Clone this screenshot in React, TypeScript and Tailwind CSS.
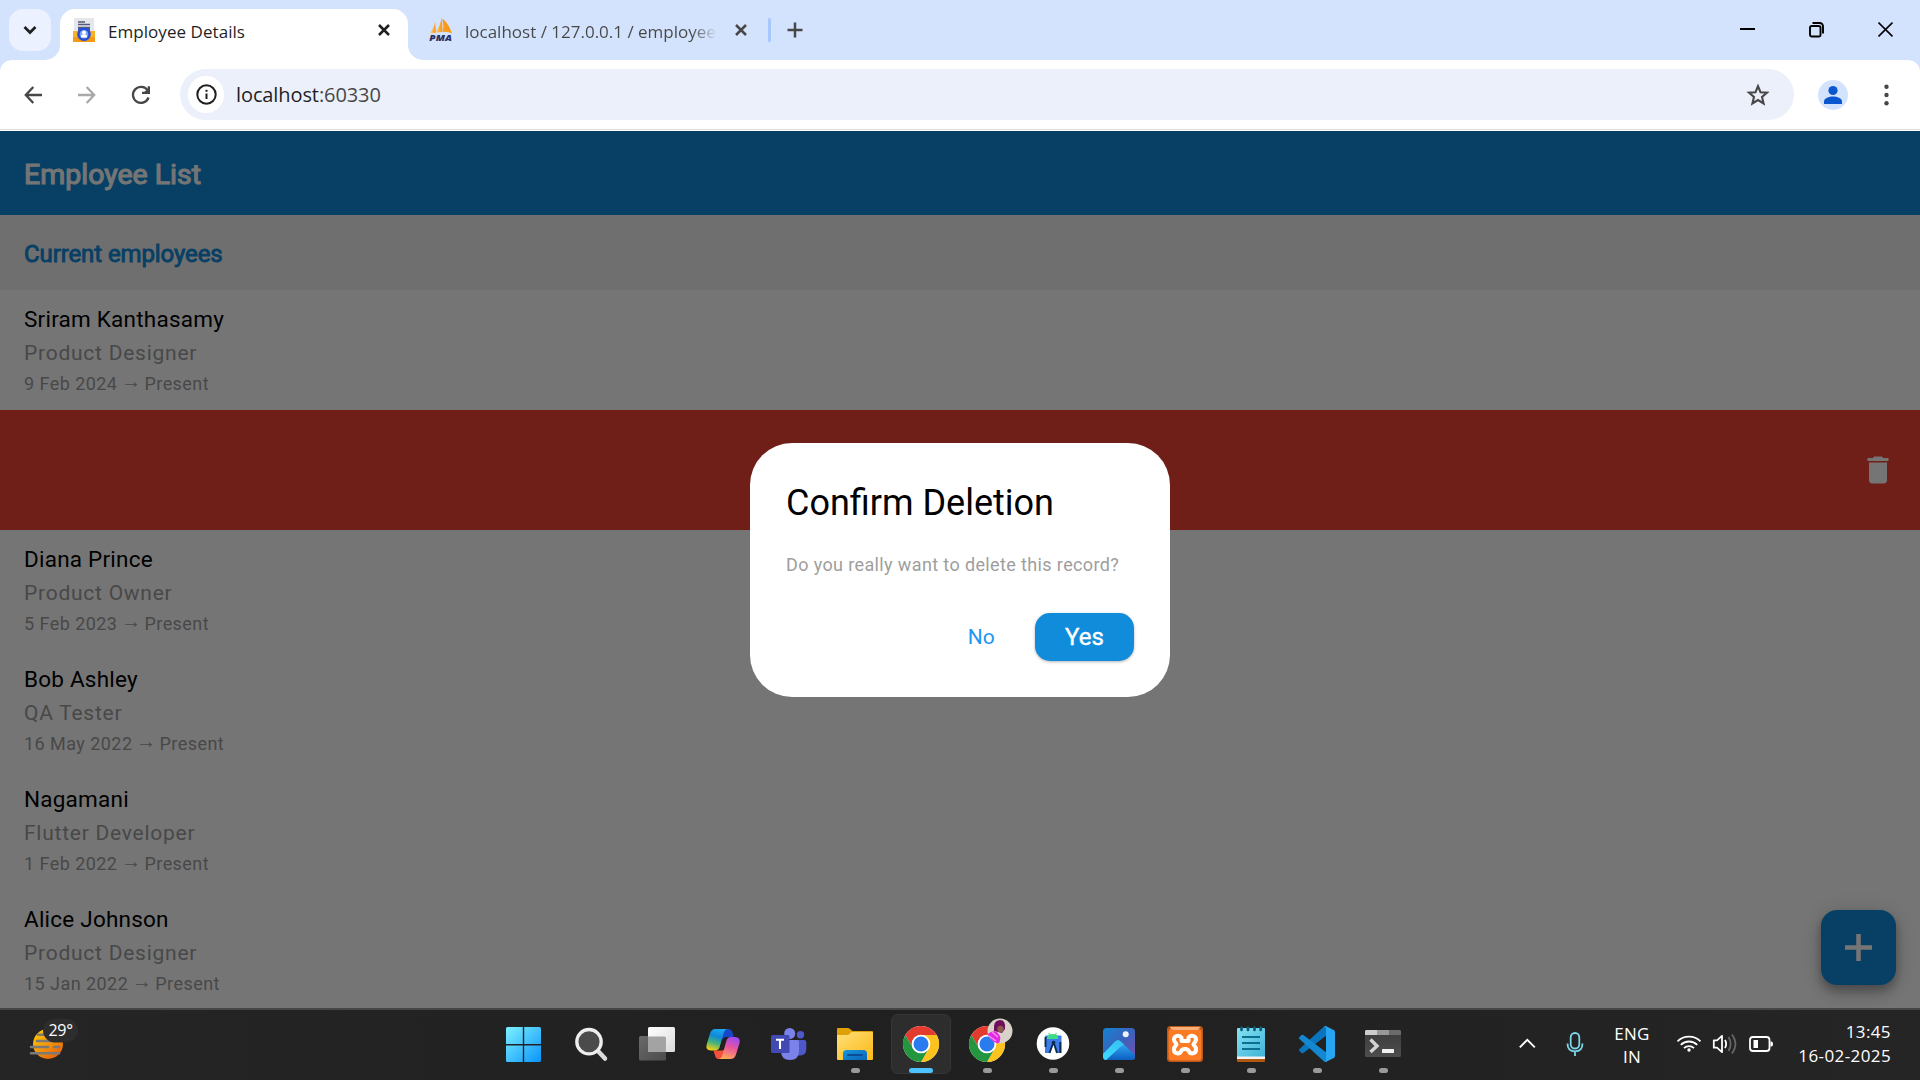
import React from "react";

const employees = [
  { name: "Sriram Kanthasamy", role: "Product Designer", since: "9 Feb 2024" },
  null,
  { name: "Diana Prince", role: "Product Owner", since: "5 Feb 2023" },
  { name: "Bob Ashley", role: "QA Tester", since: "16 May 2022" },
  { name: "Nagamani", role: "Flutter Developer", since: "1 Feb 2022" },
  { name: "Alice Johnson", role: "Product Designer", since: "15 Jan 2022" },
];

/* ---------- browser chrome ---------- */

function TabStrip() {
  return (
    <div className="relative flex h-[60px] bg-[#d3e3fd]">
      <div className="ml-[9px] mt-[9px] flex h-[42px] w-[42px] items-center justify-center rounded-[14px] bg-[#ebf1ff]">
        <svg width="14" height="10" viewBox="0 0 14 10" fill="none" stroke="#1f1f1f" strokeWidth="2.7">
          <path d="M1.5 2 L7 7.5 L12.500 2" />
        </svg>
      </div>

      <div className="relative ml-[9px] mt-[9px] flex h-[51px] w-[348px] items-center rounded-t-[15px] bg-white">
        <svg className="absolute -left-[15px] bottom-0" width="15" height="15" viewBox="0 0 15 15" fill="#fff">
          <path d="M15 0 V15 H0 A15 15 0 0 0 15 0Z" />
        </svg>
        <svg className="absolute -right-[15px] bottom-0" width="15" height="15" viewBox="0 0 15 15" fill="#fff">
          <path d="M0 0 V15 H15 A15 15 0 0 1 0 0Z" />
        </svg>
        <svg className="-mt-[9px] ml-[13px] shrink-0" width="22" height="24" viewBox="0 0 22 24">
          <path d="M1 0 H21 V14 H1Z" fill="#e6e7ea" />
          <path d="M5 4 h7 M5 6.500 h12 M5 9.500 h12" stroke="#555b78" strokeWidth="1.600" />
          <path d="M0 13 H22 V24 H0Z" fill="#fbb02a" />
          <path d="M0 19 H22 V24 H0Z" fill="#f59a16" />
          <path d="M5 10 H17 V17 H5Z" fill="#4a5aa5" />
          <circle cx="11" cy="16.300" r="6.800" fill="#2450d8" />
          <circle cx="11" cy="16.300" r="4.200" fill="#7ea5fa" />
          <circle cx="11" cy="14.500" r="2" fill="#fff" />
          <path d="M7.800 19.400 a3.200 3.200 0 0 1 6.400 0Z" fill="#fff" />
        </svg>
        <span className="-mt-[6px] ml-[13px] whitespace-nowrap font-['Open_Sans',sans-serif] text-[17px] leading-[24px] tracking-[0.05px] text-[#1f1f1f]">
          Employee Details
        </span>
        <svg className="-mt-[9px] ml-auto mr-[18px]" width="12" height="12" viewBox="0 0 12 12" stroke="#1f1f1f" strokeWidth="2.500">
          <path d="M1 1 L11 11 M11 1 L1 11" />
        </svg>
      </div>

      <div className="ml-[21px] mt-[9px] flex h-[42px] items-center">
        <svg className="overflow-visible" width="24" height="24" viewBox="0 0 24 24">
          <defs>
            <linearGradient id="sail" x1="0" y1="0" x2="1" y2="0">
              <stop offset="0" stopColor="#fdd08a" />
              <stop offset="1" stopColor="#f8930f" />
            </linearGradient>
          </defs>
          <path d="M6 3.500 Q5.800 9 1 15 Q4 15.500 7 14.500 Z" fill="url(#sail)" />
          <path d="M13 0 Q11 8 6.500 15 Q11 13.600 13.500 14 Z" fill="url(#sail)" />
          <path d="M13.500 0.500 Q20 6 23 15.500 Q18 13 14 14 Q15 8 13.500 0.500Z" fill="#f99a1c" />
          <text x="0.300" y="22.800" fontFamily="Open Sans, sans-serif" fontSize="9" fontWeight="800" fontStyle="italic" fill="#2c2d62" textLength="22.500" lengthAdjust="spacingAndGlyphs">PMA</text>
        </svg>
        <span className="mt-[3px] ml-[12px] w-[252px] overflow-hidden whitespace-nowrap bg-linear-to-r from-[#474747] from-90% to-[#47474700] bg-clip-text font-['Open_Sans',sans-serif] text-[17px] leading-[24px] text-transparent">
          localhost / 127.0.0.1 / employee
        </span>
        <svg className="ml-[18px]" width="12" height="12" viewBox="0 0 12 12" stroke="#474747" strokeWidth="2.500">
          <path d="M1 1 L11 11 M11 1 L1 11" />
        </svg>
        <div className="ml-[21px] h-[24px] w-[3px] rounded-full bg-[#a8c7fa]" />
        <svg className="ml-[16px]" width="16" height="16" viewBox="0 0 16 16" stroke="#474747" strokeWidth="2.500">
          <path d="M8 0.500 V15.500 M0.500 8 H15.500" />
        </svg>
      </div>

      <div className="ml-auto mr-[27px] mt-[21px] flex h-[17px] items-center gap-[54px]">
        <svg width="15" height="17" viewBox="0 0 15 17"><path d="M0 8 H15" stroke="#000" strokeWidth="2" /></svg>
        <svg width="15" height="17" viewBox="0 0 15 17" fill="none" stroke="#000" strokeWidth="1.900">
          <rect x="1" y="5" width="10.500" height="10.500" rx="1.800" />
          <path d="M3.500 2 H10.500 Q14 2 14 5.500 V12.500" />
        </svg>
        <svg width="15" height="17" viewBox="0 0 15 17" stroke="#000" strokeWidth="1.700">
          <path d="M0.500 1.500 L14.500 15.500 M14.500 1.500 L0.500 15.500" />
        </svg>
      </div>
    </div>
  );
}

function Toolbar() {
  return (
    <div className="bg-[#d3e3fd]">
      <div className="h-[71px] rounded-t-[12px] bg-white">
        <div className="flex h-[70px] w-full items-start border-b border-[#dfe1e5]">
          <svg className="mt-[26px] ml-[24px]" width="18" height="18" viewBox="0 0 18 18" fill="none" stroke="#474747" strokeWidth="2.300">
            <path d="M9.300 1 L1.800 9 L9.300 17 M1.800 9 H18" />
          </svg>
          <svg className="mt-[26px] ml-[36px]" width="18" height="18" viewBox="0 0 18 18" fill="none" stroke="#a9a9a9" strokeWidth="2.300">
            <path d="M8.700 1 L16.200 9 L8.700 17 M16.200 9 H0" />
          </svg>
          <svg className="mt-[25px] ml-[35px]" width="20" height="20" viewBox="0 0 20 20" fill="none" stroke="#474747" strokeWidth="2.300">
            <path d="M17.500 12.500 A8 8 0 1 1 16.500 5.200" />
            <path d="M17.800 1.200 V7.800 H11" />
            <path d="M17.800 4.500 V7.800 H14Z" fill="#474747" />
          </svg>
          <div className="mt-[9px] ml-[29px] flex h-[51px] w-[1614px] items-start rounded-full bg-[#ecf0fa]">
            <div className="mt-[7px] ml-[8px] flex h-[37px] w-[36px] items-center justify-center rounded-full bg-white">
              <svg width="21" height="21" viewBox="0 0 21 21">
                <circle cx="10.500" cy="10.500" r="9.200" fill="none" stroke="#1f1f1f" strokeWidth="2" />
                <path d="M10.500 9.500 V15" stroke="#1f1f1f" strokeWidth="2" />
                <path d="M10.500 5.800 V7.800" stroke="#1f1f1f" strokeWidth="2" />
              </svg>
            </div>
            <span className="mt-[11px] ml-[12px] whitespace-nowrap font-['Open_Sans',sans-serif] text-[20px] leading-[30px] tracking-[-0.100px] text-[#1f1f1f]">
              localhost<span className="text-[#474747]">:60330</span>
            </span>
            <svg className="mt-[14px] mr-[24px] ml-auto" width="24" height="24" viewBox="0 0 24 24" fill="none" stroke="#474747" strokeWidth="2.100">
              <path d="M12 3.200 L14.500 9.200 L21 9.700 L16 14 L17.600 20.500 L12 17 L6.400 20.500 L8 14 L3 9.700 L9.500 9.200Z" />
            </svg>
          </div>
          <svg className="mt-[20px] ml-[24px]" width="30" height="30" viewBox="0 0 30 30">
            <circle cx="15" cy="15" r="15" fill="#d3e3fd" />
            <circle cx="15" cy="10.500" r="4.600" fill="#0b57d0" />
            <path d="M6 24 V21.500 C6 18 11 16.500 15 16.500 S24 18 24 21.500 V24Z" fill="#0b57d0" />
          </svg>
          <svg className="mt-[24px] ml-[36px]" width="5" height="22" viewBox="0 0 5 22" fill="#474747">
            <circle cx="2.500" cy="2.800" r="2.200" />
            <circle cx="2.500" cy="11" r="2.200" />
            <circle cx="2.500" cy="19.200" r="2.200" />
          </svg>
        </div>
      </div>
    </div>
  );
}

/* ---------- page ---------- */

function EmployeePage() {
  return (
    <div className="relative h-[877px] overflow-hidden bg-white font-[Roboto,sans-serif]">
      <div className="flex h-[84px] items-center bg-[#118cdb] px-6 pt-[4px]">
        <h1 className="text-[28.500px] leading-[36px] font-normal text-white [-webkit-text-stroke:1.1px_#fff]">Employee List</h1>
      </div>
      <div className="flex h-[75px] items-center bg-[#f2f2f2] px-6 pt-[3px]">
        <h2 className="text-[24px] leading-[30px] font-normal tracking-[-0.100px] text-[#118cdb] [-webkit-text-stroke:0.9px_#118cdb]">Current employees</h2>
      </div>
      {employees.map((e, i) =>
        e ? (
          <div key={i} className="h-[120px] px-6 pt-3">
            <div className="text-[22.500px] leading-[34px] tracking-[0.225px] text-black">{e.name}</div>
            <div className="pt-px text-[21px] leading-[33px] tracking-[0.750px] text-[#9e9e9e]">{e.role}</div>
            <div className="-mt-px flex h-[30px] items-center gap-[5px] text-[18px] leading-[30px] tracking-[0.450px] text-[#9e9e9e]">
              <span>{e.since}</span>
              <span className="flex w-[17px] justify-center pb-[6px] font-['Liberation_Sans',sans-serif] text-[20px] leading-[24px] tracking-normal">→</span>
              <span>Present</span>
            </div>
          </div>
        ) : (
          <div key={i} className="flex h-[120px] items-center justify-end bg-[#f44336] pr-6">
            <svg width="36" height="36" viewBox="0 0 24 24" fill="#fff">
              <path d="M6 19c0 1.100.9 2 2 2h8c1.100 0 2-.9 2-2V7H6v12zM19 4h-3.500l-1-1h-5l-1 1H5v2h14V4z" />
            </svg>
          </div>
        )
      )}

      <button className="absolute right-6 bottom-[23px] flex h-[75px] w-[75px] items-center justify-center rounded-[16px] bg-[#118cdb] shadow-[0_5px_8px_rgba(0,0,0,0.2),0_9px_15px_rgba(0,0,0,0.16),0_2px_27px_rgba(0,0,0,0.12)]">
        <svg width="27" height="27" viewBox="0 0 27 27" stroke="#fff" strokeWidth="4.500">
          <path d="M13.500 0 V27 M0 13.500 H27" />
        </svg>
      </button>

      <div className="absolute inset-0 bg-black/54" />

      <div className="absolute top-[312px] left-[750px] flex h-[254px] w-[420px] flex-col rounded-[42px] bg-white p-9">
        <div className="pt-px text-[36px] leading-[46px] text-black">Confirm Deletion</div>
        <div className="mt-[23px] whitespace-nowrap text-[18px] leading-[31px] tracking-[0.375px] text-[#9e9e9e]">
          Do you really want to delete this record?
        </div>
        <div className="mt-[33px] flex items-center justify-end gap-10">
          <button className="text-[21px] leading-[30px] tracking-[0.150px] text-[#2196f3]">No</button>
          <button className="h-[48px] w-[99px] rounded-[15px] bg-[#118cdb] text-[24px] leading-[46px] text-white shadow-[0_1px_3px_rgba(0,0,0,0.3)] [-webkit-text-stroke:0.4px_#fff]">
            Yes
          </button>
        </div>
      </div>
    </div>
  );
}

/* ---------- taskbar ---------- */

function Cell({ x, w = 66, children }: { x: number; w?: number; children: React.ReactNode }) {
  return (
    <svg className="shrink-0" width={w} height="70" viewBox={`${x} 1010 ${w} 70`}>
      {children}
    </svg>
  );
}

function Dot({ cx }: { cx: number }) {
  return <rect x={cx - 4.5} y="1068" width="9" height="5" rx="2.500" fill="#9a9a9a" />;
}

function ChromeMark({ cx, cy }: { cx: number; cy: number }) {
  return (
    <g transform={`translate(${cx} ${cy})`}>
      <circle r="18" fill="#fff" />
      <path d="M-15.600 -9 A18 18 0 0 1 15.600 -9 L0 -9 A9 9 0 0 0 -7.800 4.500Z" fill="#e33b2e" />
      <path d="M15.600 -9 A18 18 0 0 1 0 18 L7.800 4.500 A9 9 0 0 0 0 -9Z" fill="#fcc31e" />
      <path d="M0 18 A18 18 0 0 1 -15.600 -9 L-7.800 4.500 A9 9 0 0 0 7.800 4.500Z" fill="#24963f" />
      <circle r="9.300" fill="#fff" />
      <circle r="7.500" fill="#2b7bf0" />
    </g>
  );
}

function TaskbarApps() {
  return (
    <div className="flex">
      <Cell x={490}>
        <defs>
          <linearGradient id="win" gradientUnits="userSpaceOnUse" x1="506" y1="1027" x2="541" y2="1062">
            <stop offset="0" stopColor="#7df1ff" />
            <stop offset="1" stopColor="#0a94fb" />
          </linearGradient>
        </defs>
        <path fill="url(#win)" d="M507.500 1027 H522.800 V1044 H506 V1028.500 Q506 1027 507.500 1027Z M524.200 1027 H539.500 Q541 1027 541 1028.500 V1044 H524.200Z M506 1045.400 H522.800 V1062 H507.500 Q506 1062 506 1060.500Z M524.200 1045.400 H541 V1060.500 Q541 1062 539.500 1062 H524.200Z" />
      </Cell>
      <Cell x={556}>
        <path d="M598 1051 L605 1058.500" stroke="#dcdcdc" strokeWidth="4.500" strokeLinecap="round" />
        <circle cx="589" cy="1041.700" r="12.200" fill="#4b4b4b" stroke="#eeeeee" strokeWidth="3.300" />
      </Cell>
      <Cell x={622}>
        <defs>
          <linearGradient id="tv" x1="0" y1="0" x2="1" y2="1"><stop offset="0" stopColor="#fff" /><stop offset="1" stopColor="#dadada" /></linearGradient>
          <linearGradient id="tv2" x1="0" y1="0" x2="1" y2="1"><stop offset="0" stopColor="#6a6a6a" /><stop offset="1" stopColor="#4c4c4c" /></linearGradient>
        </defs>
        <rect x="639" y="1036" width="27" height="24.500" rx="1.500" fill="url(#tv2)" />
        <rect x="648" y="1027" width="27" height="25" rx="1.500" fill="url(#tv)" />
        <path d="M648 1036.500 H664.500 Q666 1036.500 666 1038 V1052 H649.500 Q648 1052 648 1050.500Z" fill="#a3a3a3" />
      </Cell>
      <Cell x={688}>
        <defs>
          <linearGradient id="cpA" x1="0.600" y1="0" x2="0.300" y2="1">
            <stop offset="0" stopColor="#1ba6ef" /><stop offset=".35" stopColor="#1089d8" /><stop offset=".65" stopColor="#45b37c" /><stop offset="1" stopColor="#f6cf10" />
          </linearGradient>
          <linearGradient id="cpB" x1="0.600" y1="0" x2="0.300" y2="1">
            <stop offset="0" stopColor="#a04bf0" /><stop offset=".45" stopColor="#e9569c" /><stop offset="1" stopColor="#ffab55" />
          </linearGradient>
        </defs>
        <path d="M721 1029 H728 Q731.500 1029 732.500 1032.500 L733.800 1037 H727 Q723 1037 722 1040Z" fill="#1747c8" />
        <path d="M713.500 1050.500 H722 Q725 1050.500 726 1047 L722 1059 H718.500 Q716 1059 715 1055.500Z" fill="#f4503c" />
        <path d="M715 1029 H727.500 Q724.500 1029.500 723.500 1033.500 L719.500 1047.500 Q718.500 1050.500 715 1050.500 H711 Q705 1050.500 706.800 1044 L710 1033.500 Q711.500 1029 715 1029Z" fill="url(#cpA)" />
        <path d="M730.500 1059 H718.500 Q721.500 1058.500 722.500 1054.500 L726.500 1040.500 Q727.500 1037 731 1037 H735 Q741 1037 739.400 1043.500 L736 1054.500 Q734.500 1059 730.500 1059Z" fill="url(#cpB)" />
      </Cell>
      <Cell x={754}>
        <circle cx="800.500" cy="1034.700" r="3.700" fill="#5059c9" />
        <path d="M795 1040 H804 Q806.300 1040 806.300 1042.300 V1049 Q806.300 1055.500 800 1055.500 H795Z" fill="#4f58c8" />
        <circle cx="789.700" cy="1033.500" r="5.500" fill="#7b83eb" />
        <path d="M781 1040 H797 Q799 1040 799 1042 V1051 Q799 1060 790 1060 T781 1051Z" fill="#7b83eb" />
        <rect x="771" y="1035" width="18.500" height="18" rx="1.500" fill="#4149b3" />
        <path d="M776 1039.700 H784 M780 1039.700 V1049" stroke="#fff" strokeWidth="2.100" />
      </Cell>
      <Cell x={820}>
        <defs>
          <linearGradient id="fe" x1="0" y1="0" x2="1" y2="1"><stop offset="0" stopColor="#ffdf7a" /><stop offset="1" stopColor="#fbb914" /></linearGradient>
          <linearGradient id="fe2" x1="0" y1="0" x2="1" y2="1"><stop offset="0" stopColor="#1796de" /><stop offset="1" stopColor="#0a64b8" /></linearGradient>
        </defs>
        <path d="M838 1028 H847.500 Q849 1028 850 1029 L852.500 1031 H872 Q873 1031 873 1032 V1045 H837 V1029 Q837 1028 838 1028Z" fill="#e0a106" />
        <path d="M837 1035 H847 Q848.500 1035 849.500 1034 L851.500 1032 H872 Q873 1032 873 1033 V1059 Q873 1060 872 1060 H838 Q837 1060 837 1059Z" fill="url(#fe)" />
        <path d="M843 1060 V1053.500 Q843 1050 846.500 1050 H863.500 Q867 1050 867 1053.500 V1060Z" fill="url(#fe2)" />
        <path d="M848 1055 H862" stroke="#0b4d93" strokeWidth="1.800" strokeLinecap="round" />
        <Dot cx={855.5} />
      </Cell>
      <Cell x={886}>
        <rect x="891.500" y="1014.500" width="59" height="59" rx="6" fill="#2d2d2d" stroke="#363636" />
        <ChromeMark cx={921} cy={1044} />
        <rect x="909" y="1068" width="24" height="5" rx="2.500" fill="#4cc2ff" />
      </Cell>
      <Cell x={952}>
        <ChromeMark cx={987} cy={1044} />
        <clipPath id="av"><circle cx="1000" cy="1031" r="12.500" /></clipPath>
        <g clipPath="url(#av)">
          <rect x="987" y="1018" width="26" height="26" fill="#d9d2c9" />
          <path d="M994 1031 Q993 1020 1000 1020 Q1006 1020 1005 1029 L1002 1033 Z" fill="#6d0f5c" />
          <circle cx="1000.500" cy="1029" r="3.200" fill="#8e5b4f" />
          <path d="M986 1044 L988 1034 Q992 1030 997 1032 L1000 1036 Q1001 1041 998 1044Z" fill="#e22be0" />
          <path d="M989 1036 L996 1041 M992 1032 L998 1037" stroke="#f58cf2" strokeWidth="1.500" />
        </g>
        <Dot cx={987.5} />
      </Cell>
      <Cell x={1018}>
        <circle cx="1053" cy="1043.500" r="16.300" fill="#fff" />
        <path d="M1045 1036.500 Q1045 1035.500 1046 1035.500 H1060.500 Q1061.500 1035.500 1061.500 1036.500 V1053 H1045Z" fill="#3f7bea" />
        <path d="M1050 1053 L1053.500 1044 L1057 1053Z" fill="#fff" />
        <path d="M1047 1039 Q1047.300 1034 1052.500 1034 Q1058 1034 1058.300 1039Z" fill="#3ddb85" />
        <path d="M1048.500 1033 l1.500 2 M1056.500 1033 l-1.500 2" stroke="#3ddb85" strokeWidth="1.100" />
        <path d="M1053.500 1042 L1049.500 1053 M1053.500 1042 L1057 1053 M1060.300 1042 V1053 M1045.500 1037 V1047" stroke="#0c2c4e" strokeWidth="1.900" />
        <circle cx="1053.500" cy="1042.500" r="1.800" fill="#0c2c4e" />
        <Dot cx={1053.5} />
      </Cell>
      <Cell x={1084}>
        <defs>
          <linearGradient id="ph" x1="0" y1="0" x2="1" y2="1"><stop offset="0" stopColor="#1583d3" /><stop offset=".5" stopColor="#3a62bb" /><stop offset="1" stopColor="#7a4fae" /></linearGradient>
          <linearGradient id="ph2" x1="0" y1="0" x2="0" y2="1"><stop offset="0" stopColor="#2f9fee" /><stop offset="1" stopColor="#0b5fc0" /></linearGradient>
          <linearGradient id="ph3" x1="1" y1="0" x2="0" y2="1"><stop offset="0" stopColor="#35bff0" /><stop offset="1" stopColor="#3edbff" /></linearGradient>
          <clipPath id="phc"><rect x="1103" y="1028" width="32" height="32" rx="3.500" /></clipPath>
        </defs>
        <g clipPath="url(#phc)">
          <rect x="1103" y="1028" width="32" height="32" fill="url(#ph)" />
          <path d="M1106 1060 L1121 1046.500 Q1123.500 1044.500 1126 1046.500 L1136 1056 V1060Z" fill="url(#ph2)" />
          <path d="M1103 1054 L1115 1041.500 Q1118 1038.500 1121 1041.500 L1125 1045.500 Q1122.500 1045 1121 1046.500 L1106 1060 H1103Z" fill="url(#ph3)" />
          <circle cx="1125.700" cy="1034.300" r="3" fill="#eef3fb" />
        </g>
        <Dot cx={1119.5} />
      </Cell>
      <Cell x={1150}>
        <rect x="1167" y="1026" width="36" height="36" rx="3.500" fill="#b9581a" />
        <rect x="1168.500" y="1029" width="33" height="31.500" rx="3" fill="#fb7a24" />
        <path d="M1170 1027 H1200 Q1199 1030 1196 1030 H1174 Q1171 1030 1170 1027Z" fill="#f7b07a" />
        <path d="M1181.500 1037.500 C1179.500 1034.500 1174 1035.500 1174 1039.500 C1174 1042.500 1176.500 1043 1176.500 1044.500 C1176.500 1045.500 1174 1046 1174 1049.500 C1174 1054 1179.500 1054.500 1181 1051.500 C1182 1048 1188 1048 1189 1051.500 C1190.500 1054.500 1196 1054 1196 1049.500 C1196 1046 1193.500 1045.500 1193.500 1044.500 C1193.500 1043 1196 1042.500 1196 1039.500 C1196 1035.500 1190.500 1034.500 1188.500 1037.500 V1041 H1181.500Z" fill="none" stroke="#fff" strokeWidth="4" strokeLinejoin="round" />
        <Dot cx={1185.5} />
      </Cell>
      <Cell x={1216}>
        <defs><linearGradient id="np" x1="0" y1="0" x2="1" y2="1"><stop offset="0" stopColor="#85e3f2" /><stop offset="1" stopColor="#3fb3d6" /></linearGradient></defs>
        <path d="M1237 1056 H1265 V1061 Q1265 1062 1264 1062 H1238 Q1237 1062 1237 1061Z" fill="#b1580f" />
        <path d="M1237 1055 H1265 V1059 H1237Z" fill="#f3f3f3" />
        <path d="M1238 1028 H1264 Q1265 1028 1265 1029 V1056.500 H1237 V1029 Q1237 1028 1238 1028Z" fill="url(#np)" />
        <path d="M1242 1037 H1260 M1242 1043 H1260 M1242 1049 H1260" stroke="#0c6e92" strokeWidth="1.900" />
        <path d="M1241.500 1027.500 V1030 M1248 1027.500 V1030 M1254.500 1027.500 V1030 M1260.700 1027.500 V1030" stroke="#0e5a78" strokeWidth="2.700" strokeLinecap="round" />
        <Dot cx={1251.5} />
      </Cell>
      <Cell x={1282}>
        <g transform="translate(1299 1026) scale(1.500)">
          <path fill="#0a74bd" d="M16.505 .5 L.327 15.260a1 1 0 0 0 .001 1.479L1.650 17.940a.999.999 0 0 0 1.276.057L18.004 6.552V0Z" />
          <path fill="#1387cf" d="M2.925 6.002a.999.999 0 0 0-1.276.057L.327 7.261A1 1 0 0 0 .326 8.740L16.500 23.500 18.210 23.790 18.004 17.448 2.925 6.002Z" />
          <path fill="#27a4f2" d="M16.505 .5 A1.494 1.494 0 0 1 18.210 .210 L23.150 2.587 A1.500 1.500 0 0 1 24 3.939 V20.060 A1.500 1.500 0 0 1 23.152 21.412 L18.210 23.789 A1.492 1.492 0 0 1 16.506 23.499 Q18.004 24 18.004 22 V2 Q18.004 .2 16.505 .5Z" />
        </g>
        <Dot cx={1317.5} />
      </Cell>
      <Cell x={1348}>
        <defs><linearGradient id="tm" x1="0" y1="0" x2="0" y2="1"><stop offset="0" stopColor="#3c3c3c" /><stop offset="1" stopColor="#4d4d4d" /></linearGradient></defs>
        <rect x="1365" y="1030" width="36" height="27" rx="1.500" fill="url(#tm)" />
        <path d="M1366 1030 H1377 V1035 H1365 V1031Z" fill="#cccccc" />
        <path d="M1377 1030 H1389 V1035 H1377Z" fill="#999999" />
        <path d="M1389 1030 H1400 L1401 1031 V1035 H1389Z" fill="#6b6b6b" />
        <path d="M1370.500 1039.500 L1377 1046 L1370.500 1052" fill="none" stroke="#d4d4d4" strokeWidth="3.400" />
        <rect x="1382" y="1049" width="12" height="4" rx=".5" fill="#f2f2f2" />
        <Dot cx={1383.5} />
      </Cell>
    </div>
  );
}

function Taskbar() {
  return (
    <div className="flex h-[72px] border-t-2 border-[#464646] bg-linear-to-r from-[#252525] via-[#202020] to-[#252525] font-['Open_Sans',sans-serif] text-white">
      <div className="w-[490px]">
        <Cell x={0} w={100}>
          <defs>
            <linearGradient id="sun" x1="0.100" y1="0" x2="0.800" y2="1"><stop offset="0" stopColor="#fdd000" /><stop offset=".5" stopColor="#f59a0a" /><stop offset="1" stopColor="#e45a0c" /></linearGradient>
          </defs>
          <circle cx="48" cy="1044" r="15" fill="url(#sun)" />
          <path d="M38 1034.700 H46 M37 1041 H55 M31 1047 H48 M54 1047 H59 M31 1053.300 H59" stroke="#7d7a76" strokeWidth="2.600" strokeLinecap="round" />
          <rect x="43" y="1018.500" width="35" height="24" rx="12" fill="#2d2d2d" />
          <text x="48.500" y="1036" fontSize="16" fill="#fff" fontFamily="Open Sans, sans-serif" textLength="24.500">29°</text>
        </Cell>
      </div>
      <TaskbarApps />
      <div className="ml-auto flex">
        <Cell x={1510} w={90}>
          <path d="M1519.800 1047.300 L1527.300 1039.800 L1534.800 1047.300" fill="none" stroke="#fff" strokeWidth="1.900" />
          <g fill="none" stroke="#7cd6ea" strokeWidth="1.800">
            <rect x="1570.700" y="1033" width="8.600" height="15.500" rx="4.300" />
            <path d="M1567.500 1043.500 Q1567.500 1051.300 1575 1051.300 T1582.500 1043.500 M1575 1051.300 V1056" />
          </g>
        </Cell>
        <div className="flex w-[64px] flex-col items-center pt-[12px] text-[17px] leading-[23px] tracking-[0.300px]">
          <span>ENG</span>
          <span>IN</span>
        </div>
        <Cell x={1664} w={116}>
          <g fill="none" stroke="#fff" strokeWidth="1.800">
            <path d="M1677.500 1041.300 A16.500 16.500 0 0 1 1700.500 1041.300" />
            <path d="M1680.800 1044.800 A11.800 11.800 0 0 1 1697.200 1044.800" />
            <path d="M1684 1048.200 A7.200 7.200 0 0 1 1694 1048.200" />
            <circle cx="1689" cy="1050" r="1.700" fill="#fff" stroke="none" />
            <path d="M1713.800 1040.300 H1717 L1722 1035.800 V1052.200 L1717 1047.700 H1713.800Z" strokeLinejoin="round" />
            <path d="M1725 1040 Q1727.300 1044 1725 1048" />
            <path d="M1728.500 1037 Q1732.800 1044 1728.500 1051 M1732 1034.500 Q1739 1044 1732 1053.500" stroke="#666" />
            <rect x="1750" y="1037" width="19.500" height="14" rx="3" />
            <path d="M1753.500 1040 H1758 V1048 H1753.500Z" fill="#fff" stroke="none" />
            <path d="M1770.500 1041.500 h1 q1.500 0 1.500 2.500 t-1.500 2.500 h-1Z" fill="#fff" stroke="none" />
          </g>
        </Cell>
        <div className="flex w-[140px] flex-col items-end pt-[10px] pr-[29px] text-[17px] leading-[24px] tracking-[0.400px]">
          <span>13:45</span>
          <span>16-02-2025</span>
        </div>
      </div>
    </div>
  );
}

export default function App() {
  return (
    <div className="flex h-[1080px] w-[1920px] flex-col overflow-hidden">
      <TabStrip />
      <Toolbar />
      <EmployeePage />
      <Taskbar />
    </div>
  );
}
